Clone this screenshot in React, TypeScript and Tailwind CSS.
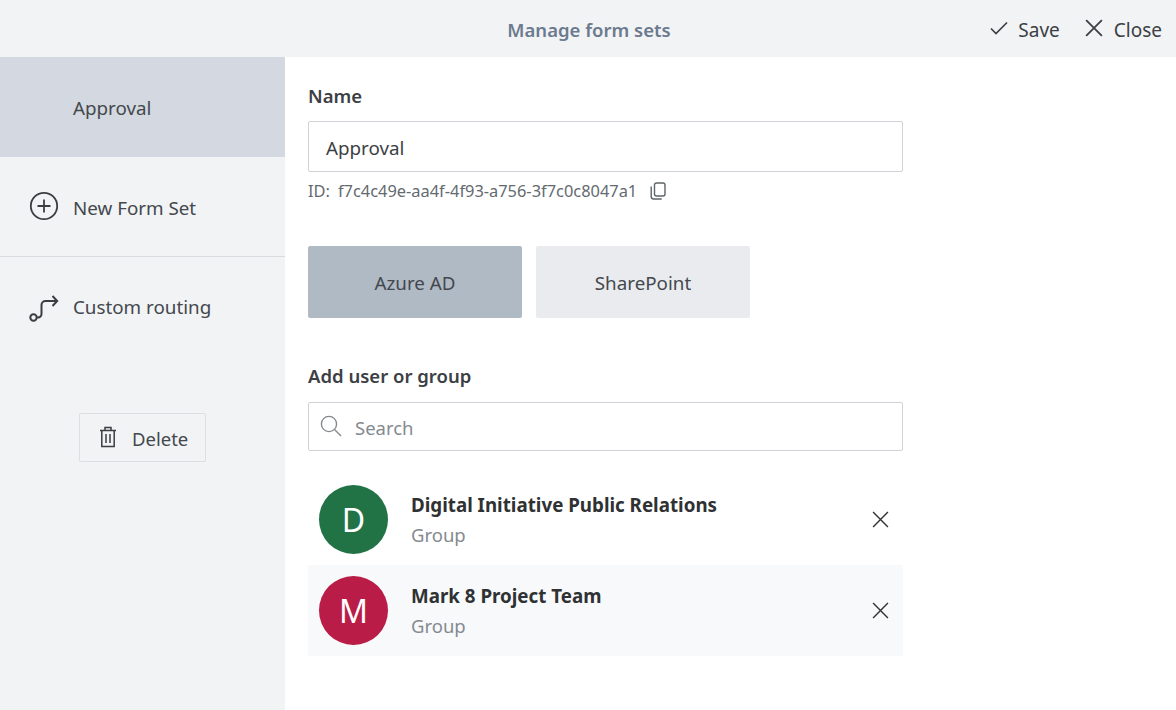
import React from "react";

const X = ({ size, sw = 1.5, className = "" }: { size: number; sw?: number; className?: string }) => (
  <svg width={size} height={size} viewBox="0 0 16 16" fill="none" stroke="currentColor" strokeWidth={sw} className={className}>
    <path d="M1 1 15 15M15 1 1 15" />
  </svg>
);

function Person({ letter, name, color, shaded }: { letter: string; name: string; color: string; shaded?: boolean }) {
  return (
    <div className={`flex h-[91px] items-center pl-[11px] pr-[14px] ${shaded ? "bg-[#f7f9fb]" : ""}`}>
      <div className={`flex h-[69px] w-[69px] shrink-0 items-center justify-center rounded-full text-[32px] leading-none text-white ${color}`}>
        {letter}
      </div>
      <div className="ml-[23px] flex-1">
        <div className="text-[18.75px] font-bold leading-[30px] text-[#2f3133]">{name}</div>
        <div className="text-[18.5px] leading-[30px] text-[#858a8f]">Group</div>
      </div>
      <X size={17} sw={1.3} className="mb-[1px] text-[#2f3133]" />
    </div>
  );
}

export default function App() {
  return (
    <div className="flex h-[710px] w-[1176px] flex-col overflow-hidden bg-white font-['Noto_Sans','Open_Sans',sans-serif] text-[#3c4044]">
      <header className="relative flex h-[57px] shrink-0 items-center justify-end bg-[#f1f3f5] pr-[14px]">
        <div className="absolute inset-x-0 top-0 flex h-full items-center justify-center pl-[2px] pt-[2px] text-[18.5px] font-semibold text-[#6c7a8e]">
          Manage form sets
        </div>
        <div className="relative flex items-center pt-[3px] text-[19px] text-[#3c4044]">
          <svg width="18" height="14" viewBox="0 0 18 14" fill="none" stroke="currentColor" strokeWidth="1.7" className="mb-[5px] mr-[10px]">
            <path d="M1 7.5 6 12.5 17 1.5" />
          </svg>
          <span>Save</span>
          <X size={18} sw={1.6} className="mb-[5px] ml-[25px] mr-[11px]" />
          <span>Close</span>
        </div>
      </header>

      <div className="flex min-h-0 flex-1">
        <aside className="flex w-[285px] shrink-0 flex-col bg-[#f1f3f5] text-[18.8px] text-[#44484d]">
          <div className="flex h-[100px] items-center bg-[#d3d8e1] pl-[73px] pt-[2px]">Approval</div>
          <div className="flex h-[100px] items-center gap-[14px] border-b border-[#d9dbde] pl-[29px]">
            <svg width="30" height="30" viewBox="0 0 30 30" fill="none" stroke="#3a3e42" strokeWidth="1.8" className="mb-[2px]">
              <circle cx="15" cy="15" r="13.2" />
              <path d="M15 8.5v13M8.5 15h13" />
            </svg>
            <span className="pt-[3px]">New Form Set</span>
          </div>
          <div className="flex h-[100px] items-center gap-[14px] pl-[29px]">
            <svg width="30" height="30" viewBox="0 0 30 30" fill="none" stroke="#3a3e42" strokeWidth="2">
              <circle cx="4.5" cy="25.5" r="3.2" />
              <path d="M7.7 25.5h1.3a3.5 3.5 0 0 0 3.5-3.5v-9a4 4 0 0 1 4-4H28M23.5 4l4.7 5-4.7 5" />
            </svg>
            <span>Custom routing</span>
          </div>
          <div className="mt-[56px] flex justify-center">
            <button className="flex h-[49px] w-[127px] items-center rounded-[2px] border border-[#dcdee1] pl-[19px] pt-[2px] text-[18.5px] text-[#44484d]">
              <svg width="18" height="22" viewBox="0 0 18 22" fill="none" stroke="#3a3e42" strokeWidth="1.5" className="mb-[3px] mr-[15px]">
                <path d="M1 4.5h16M6 4.5V1.5h6v3M2.8 4.5v16h12.4v-16M7 8v9M11 8v9" />
              </svg>
              <span>Delete</span>
            </button>
          </div>
        </aside>

        <main className="ml-[23px] w-[595px] shrink-0">
          <div className="mt-[25px] text-[18.5px] font-semibold leading-[28px] text-[#3c4044]">Name</div>
          <div className="mt-[11px] flex h-[51px] items-center rounded-[2px] border border-[#cfd2d6] pl-[17px] pt-[3px] text-[18.8px] text-[#3c4044]">
            Approval
          </div>
          <div className="mt-[7px] flex h-[24px] items-center text-[16.4px] text-[#636a70]">
            <span>ID:</span>
            <span className="ml-[8px]">f7c4c49e-aa4f-4f93-a756-3f7c0c8047a1</span>
            <svg width="16" height="18" viewBox="0 0 16 18" fill="none" stroke="#5f6468" strokeWidth="1.4" className="ml-[13px]">
              <rect x="4.5" y="1" width="10.5" height="13" rx="2" />
              <path d="M1.2 4.5v10a2.5 2.5 0 0 0 2.5 2.5h8" />
            </svg>
          </div>
          <div className="mt-[43px] flex gap-[14px] text-[18.8px] text-[#44484d]">
            <div className="flex h-[72px] w-[214px] items-center justify-center rounded-[2px] bg-[#b0bac5] pt-[2px]">Azure AD</div>
            <div className="flex h-[72px] w-[214px] items-center justify-center rounded-[2px] bg-[#e9ebef] pt-[2px]">SharePoint</div>
          </div>
          <div className="mt-[44px] text-[18.5px] font-semibold leading-[28px] text-[#3c4044]">Add user or group</div>
          <div className="mt-[12px] flex h-[49px] items-center rounded-[2px] border border-[#cfd2d6] pl-[11px] text-[18.5px] text-[#858a8f]">
            <svg width="22" height="22" viewBox="0 0 22 22" fill="none" stroke="#858a8f" strokeWidth="1.4" className="mb-[2px] mr-[13px]">
              <circle cx="9" cy="9" r="7.6" />
              <path d="M14.5 14.5 21 21" />
            </svg>
            <span className="pt-[2px]">Search</span>
          </div>
          <div className="mt-[23px]">
            <Person letter="D" name="Digital Initiative Public Relations" color="bg-[#217346]" />
            <Person letter="M" name="Mark 8 Project Team" color="bg-[#b91c47]" shaded />
          </div>
        </main>
      </div>
    </div>
  );
}
